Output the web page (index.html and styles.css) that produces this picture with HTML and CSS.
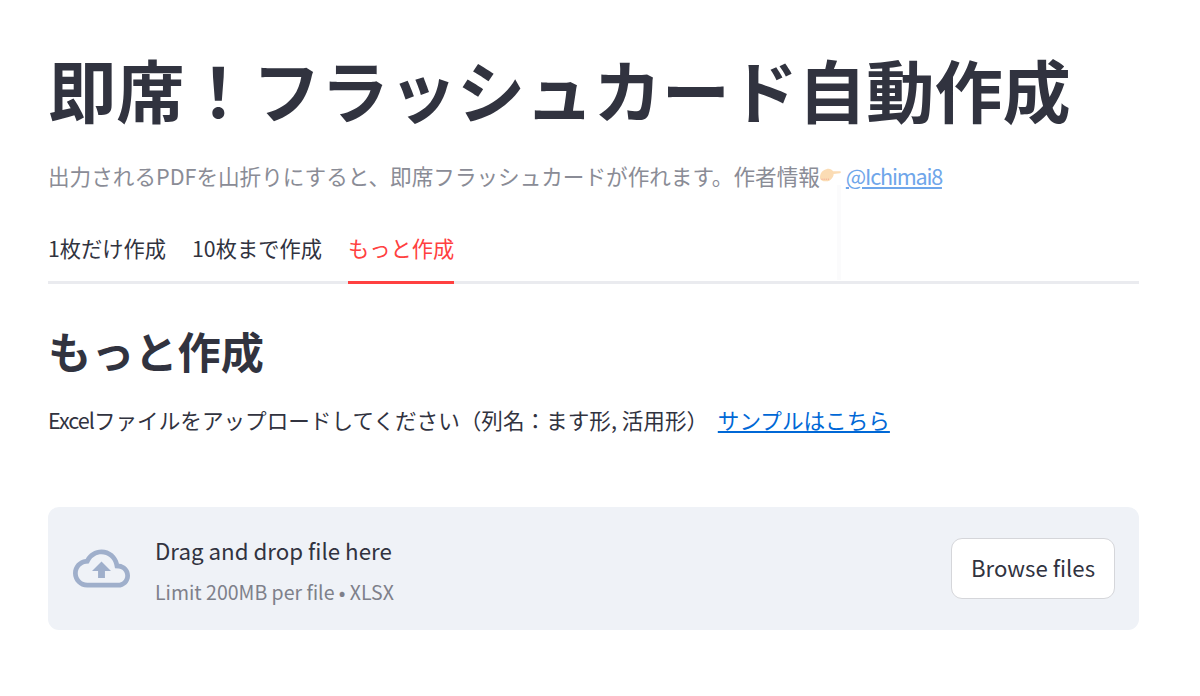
FILE: index.html
```html
<!DOCTYPE html>
<html lang="ja">
<head>
<meta charset="utf-8">
<title>即席！フラッシュカード自動作成</title>
<link rel="stylesheet" href="styles.css">
</head>
<body>
<main class="page">
  <h1 class="title">即席！フラッシュカード自動作成</h1>
  <p class="caption">出力されるPDFを山折りにすると、即席フラッシュカードが作れます。作者情報<svg class="hand" viewBox="0 0 20 13" aria-hidden="true"><path d="M0 9C0 5 2 2 6 1c3-1 5 0 6.500 2H19c1 0 1.200 1.700 0 1.900l-6 .6c0 2-1 3.500-2 4.500-1 1.500-3 2.500-5 2.500C2 12.500 0 11 0 9z" fill="#fbdcb4"/><path d="M1.500 10.500h.9M3.500 10.500h.9M5.500 10.500h.9M7.500 10.500h.9" stroke="#ee8378" stroke-width=".7"/></svg> <a class="caption-link" href="#">@Ichimai8</a></p>
  <nav class="tabs">
    <span class="tab">1枚だけ作成</span>
    <span class="tab">10枚まで作成</span>
    <span class="tab active">もっと作成</span>
  </nav>
  <h2 class="heading">もっと作成</h2>
  <p class="body-text"><span class="tight">Excel</span>ファイルをアップロードしてください（列名：ます形, 活用形）&nbsp; <a class="link" href="#">サンプルはこちら</a></p>
  <section class="uploader">
    <svg class="cloud" viewBox="0 0 24 24" aria-hidden="true"><path fill="#9fafcb" d="M19.350 10.040C18.670 6.590 15.640 4 12 4 9.110 4 6.600 5.640 5.350 8.040 2.340 8.360 0 10.910 0 14c0 3.310 2.690 6 6 6h13c2.760 0 5-2.240 5-5 0-2.640-2.050-4.780-4.650-4.960zM19 18H6c-2.210 0-4-1.790-4-4 0-2.050 1.530-3.760 3.560-3.970l1.070-.11.500-.95C8.080 7.140 9.940 6 12 6c2.620 0 4.880 1.860 5.390 4.430l.300 1.500 1.530.11c1.560.1 2.780 1.410 2.780 2.960 0 1.650-1.350 3-3 3zM8 13h2.550v3h2.900v-3H16l-4-4z"/></svg>
    <div class="drop-text">
      <div class="drop-title">Drag and drop file here</div>
      <div class="drop-limit">Limit 200MB per file • XLSX</div>
    </div>
    <button class="browse" type="button">Browse files</button>
  </section>
</main>
<div class="ghost-line"></div>
</body>
</html>
```
FILE: styles.css
```css
* { box-sizing: border-box; }
html, body { margin: 0; padding: 0; background: #fff; }
body {
  width: 1200px;
  height: 696px;
  overflow: hidden;
  font-family: "Noto Sans CJK JP", "Noto Sans", sans-serif;
  color: #31333f;
  position: relative;
}
.page { padding: 43px 61px 0 48px; display: flex; flex-direction: column; }
.title { margin: 0; font-size: 68.2px; line-height: 92px; font-weight: 700; white-space: nowrap; }
.caption { margin: 25px 0 0; font-size: 21.6px; line-height: 32px; color: #8a8c96; white-space: nowrap; display: flex; align-items: center; }
.hand { width: 21px; height: 14px; margin: -2px 5px 0 0; flex: none; }
.caption-link { color: #6fa6ea; font-size: 21.6px; letter-spacing: -1.200px; }
.tabs { display: flex; gap: 26px; margin-top: 40px; height: 52px; border-bottom: 3px solid #eaebef; }
.tab { font-size: 21.25px; line-height: 32px; height: 52px; white-space: nowrap; }
.tab.active { color: #ff4040; border-bottom: 3px solid #ff4040; }
.heading { margin: 36px 0 0; font-size: 43.2px; line-height: 60px; font-weight: 700; }
.body-text { margin: 23px 0 0; font-size: 21.6px; line-height: 34px; white-space: nowrap; }
.tight { letter-spacing: -1px; }
.link { color: #0068d6; }
.uploader {
  margin-top: 70px;
  height: 123px;
  background: #eff2f7;
  border-radius: 11px;
  display: flex;
  align-items: center;
  padding: 0 24px;
}
.cloud { width: 57px; height: 57px; margin: 0 25px 0 1px; flex: none; }
.drop-text { flex: 1; padding-top: 2px; }
.drop-title { font-size: 22.3px; line-height: 32px; }
.drop-limit { font-size: 19.5px; line-height: 28px; margin-top: 12px; color: #7e808a; }
.browse {
  width: 164px;
  height: 61px;
  background: #fff;
  border: 1.500px solid #d5d6da;
  border-radius: 11px;
  font: inherit;
  font-size: 22.2px;
  color: #31333f;
  padding: 0 0 4px;
}
.ghost-line { position: absolute; left: 837px; top: 185px; width: 4px; height: 95px; background: #fbfbfc; }
```
